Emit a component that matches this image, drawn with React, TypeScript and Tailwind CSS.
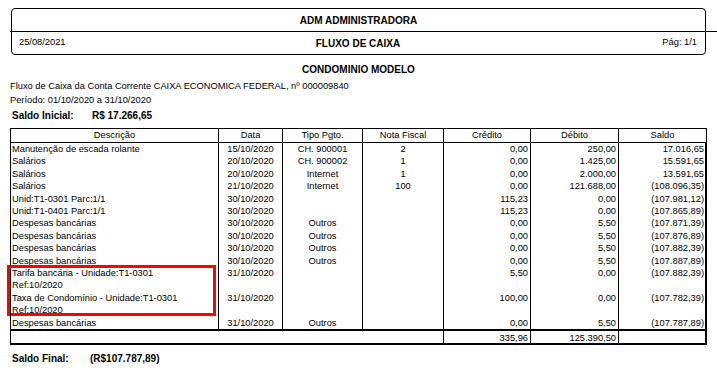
type Row = {
  desc: string[];
  data: string;
  tipo: string;
  nota: string;
  cred: string;
  deb: string;
  saldo: string;
  marked?: boolean;
};

const rows: Row[] = [
  { desc: ["Manutenção de escada rolante"], data: "15/10/2020", tipo: "CH. 900001", nota: "2", cred: "0,00", deb: "250,00", saldo: "17.016,65" },
  { desc: ["Salários"], data: "20/10/2020", tipo: "CH. 900002", nota: "1", cred: "0,00", deb: "1.425,00", saldo: "15.591,65" },
  { desc: ["Salários"], data: "20/10/2020", tipo: "Internet", nota: "1", cred: "0,00", deb: "2.000,00", saldo: "13.591,65" },
  { desc: ["Salários"], data: "21/10/2020", tipo: "Internet", nota: "100", cred: "0,00", deb: "121.688,00", saldo: "(108.096,35)" },
  { desc: ["Unid:T1-0301 Parc:1/1"], data: "30/10/2020", tipo: "", nota: "", cred: "115,23", deb: "0,00", saldo: "(107.981,12)" },
  { desc: ["Unid:T1-0401 Parc:1/1"], data: "30/10/2020", tipo: "", nota: "", cred: "115,23", deb: "0,00", saldo: "(107.865,89)" },
  { desc: ["Despesas bancárias"], data: "30/10/2020", tipo: "Outros", nota: "", cred: "0,00", deb: "5,50", saldo: "(107.871,39)" },
  { desc: ["Despesas bancárias"], data: "30/10/2020", tipo: "Outros", nota: "", cred: "0,00", deb: "5,50", saldo: "(107.876,89)" },
  { desc: ["Despesas bancárias"], data: "30/10/2020", tipo: "Outros", nota: "", cred: "0,00", deb: "5,50", saldo: "(107.882,39)" },
  { desc: ["Despesas bancárias"], data: "30/10/2020", tipo: "Outros", nota: "", cred: "0,00", deb: "5,50", saldo: "(107.887,89)" },
  { desc: ["Tarifa bancária - Unidade:T1-0301", "Ref:10/2020"], data: "31/10/2020", tipo: "", nota: "", cred: "5,50", deb: "0,00", saldo: "(107.882,39)", marked: true },
  { desc: ["Taxa de Condomínio - Unidade:T1-0301", "Ref:10/2020"], data: "31/10/2020", tipo: "", nota: "", cred: "100,00", deb: "0,00", saldo: "(107.782,39)" },
  { desc: ["Despesas bancárias"], data: "31/10/2020", tipo: "Outros", nota: "", cred: "0,00", deb: "5,50", saldo: "(107.787,89)" },
];

const headers = ["Descrição", "Data", "Tipo Pgto.", "Nota Fiscal", "Crédito", "Débito", "Saldo"];

export default function App() {
  return (
    <div className="w-[717px] h-[373px] overflow-hidden bg-white pt-[8px] font-['Liberation_Sans',Arial,sans-serif] text-black">
      {/* cabeçalho do relatório */}
      <div className="ml-[11px] w-[695px] rounded-[4px] border border-black flex flex-col text-[10px]">
        <div className="h-[22px] flex items-center justify-center font-bold">ADM ADMINISTRADORA</div>
        <div className="h-px bg-black -ml-[2px] -mr-[13px]" />
        <div className="h-[22px] grid grid-cols-[1fr_auto_1fr] items-center pl-[7px] pr-[8px]">
          <span className="text-[9.3px]">25/08/2021</span>
          <span className="font-bold">FLUXO DE CAIXA</span>
          <span className="text-right text-[9.3px]">Pág: 1/1</span>
        </div>
      </div>

      <div className="px-[10px]">
        <div className="mt-[8px] h-[14px] leading-[14px] text-center text-[10px] font-bold">CONDOMINIO MODELO</div>
        <div className="mt-[2px] h-[14px] leading-[14px] text-[9.3px]">
          Fluxo de Caixa da Conta Corrente CAIXA ECONOMICA FEDERAL, nº 000009840
        </div>
        <div className="h-[14px] leading-[14px] text-[9.3px]">Período: 01/10/2020 a 31/10/2020</div>
        <div className="mt-[2px] h-[14px] leading-[14px] flex text-[10px] font-bold pl-[2px]">
          <span className="w-[80px]">Saldo Inicial:</span>
          <span>R$ 17.266,65</span>
        </div>

        {/* tabela */}
        <div className="mt-[5px] w-[697px] grid grid-cols-[208px_64px_80px_81px_87px_88px_89px] text-[9.3px] leading-[12.4px]">
          {headers.map((h, i) => (
            <div
              key={h}
              className={`h-[15px] flex items-center justify-center border-y border-l border-black ${i === 6 ? "border-r" : ""}`}
            >
              {h}
            </div>
          ))}

          {rows.map((r, idx) => (
            <div key={idx} className="contents">
              <div className="relative border-l border-black pl-[1px] whitespace-nowrap">
                {r.desc.map((line, j) => (
                  <div key={j}>{line}</div>
                ))}
                {r.marked && (
                  <div className="absolute left-[-4px] top-[-2px] w-[209px] h-[51px] border-[3px] border-[#f00]" />
                )}
              </div>
              <div className="border-l border-black text-center">{r.data}</div>
              <div className="border-l border-black text-center">{r.tipo}</div>
              <div className="border-l border-black text-center">{r.nota}</div>
              <div className="border-l border-black text-right pr-[2px]">{r.cred}</div>
              <div className="border-l border-black text-right pr-[2px]">{r.deb}</div>
              <div className="border-l border-r-2 border-black text-right pr-[1px]">{r.saldo}</div>
            </div>
          ))}

          <div className="col-span-4 h-[16px] border-l border-t-2 border-b-2 border-black" />
          <div className="h-[16px] border-l border-t-2 border-b-2 border-black text-right pr-[2px] leading-[14px]">335,96</div>
          <div className="h-[16px] border-l border-t-2 border-b-2 border-black text-right pr-[2px] leading-[14px]">125.390,50</div>
          <div className="h-[16px] border-l border-r-2 border-t-2 border-b-2 border-black" />
        </div>

        <div className="mt-[7px] h-[14px] leading-[14px] flex text-[10px] font-bold pl-[2px]">
          <span className="w-[78px]">Saldo Final:</span>
          <span>(R$107.787,89)</span>
        </div>
      </div>
    </div>
  );
}
